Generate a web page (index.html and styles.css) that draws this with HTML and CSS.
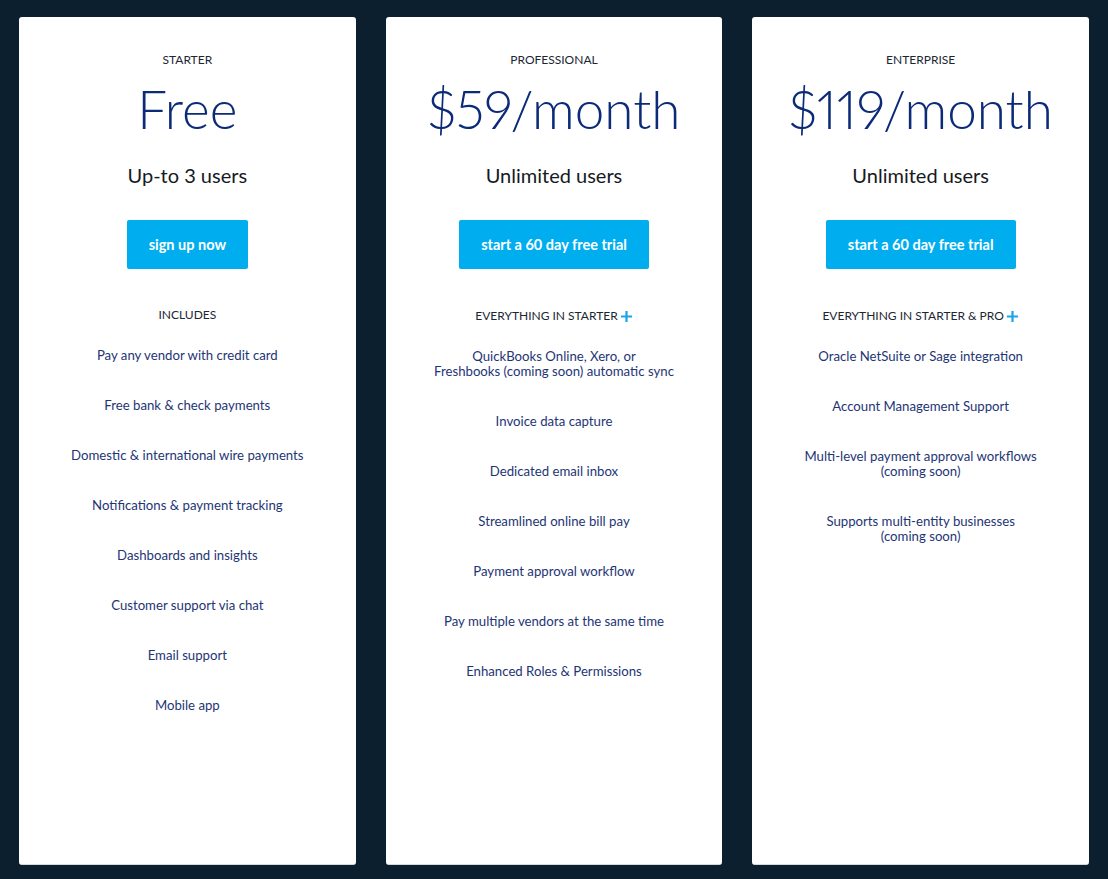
FILE: index.html
```html
<!DOCTYPE html>
<html lang="en">
<head>
<meta charset="utf-8">
<title>Pricing</title>
<link rel="stylesheet" href="styles.css">
</head>
<body>
<main class="plans">
  <section class="card">
    <h2 class="tier">STARTER</h2>
    <div class="price">Free</div>
    <div class="users">Up-to 3 users</div>
    <a class="btn" href="#">sign up now</a>
    <h3 class="inc">INCLUDES</h3>
    <ul class="features">
      <li>Pay any vendor with credit card</li>
      <li>Free bank &amp; check payments</li>
      <li>Domestic &amp; international wire payments</li>
      <li>Notifications &amp; payment tracking</li>
      <li>Dashboards and insights</li>
      <li>Customer support via chat</li>
      <li>Email support</li>
      <li>Mobile app</li>
    </ul>
  </section>
  <section class="card">
    <h2 class="tier">PROFESSIONAL</h2>
    <div class="price">$59/month</div>
    <div class="users">Unlimited users</div>
    <a class="btn" href="#">start a 60 day free trial</a>
    <h3 class="inc">EVERYTHING IN STARTER<span class="plus"><svg viewBox="0 0 14 14" width="13" height="13"><path d="M7 1v12M1 7h12" stroke="#1aa5ec" stroke-width="2.4" fill="none"/></svg></span></h3>
    <ul class="features">
      <li>QuickBooks Online, Xero, or<br>Freshbooks (coming soon) automatic sync</li>
      <li>Invoice data capture</li>
      <li>Dedicated email inbox</li>
      <li>Streamlined online bill pay</li>
      <li>Payment approval workflow</li>
      <li>Pay multiple vendors at the same time</li>
      <li>Enhanced Roles &amp; Permissions</li>
    </ul>
  </section>
  <section class="card">
    <h2 class="tier">ENTERPRISE</h2>
    <div class="price">$119/month</div>
    <div class="users">Unlimited users</div>
    <a class="btn" href="#">start a 60 day free trial</a>
    <h3 class="inc">EVERYTHING IN STARTER &amp; PRO<span class="plus"><svg viewBox="0 0 14 14" width="13" height="13"><path d="M7 1v12M1 7h12" stroke="#1aa5ec" stroke-width="2.4" fill="none"/></svg></span></h3>
    <ul class="features">
      <li>Oracle NetSuite or Sage integration</li>
      <li>Account Management Support</li>
      <li>Multi-level payment approval workflows<br>(coming soon)</li>
      <li>Supports multi-entity businesses<br>(coming soon)</li>
    </ul>
  </section>
</main>
</body>
</html>
```

FILE: styles.css
```css
* { box-sizing: border-box; }
html, body { margin: 0; padding: 0; }
body {
  background: #0b1f2e;
  font-family: Lato, "Open Sans", sans-serif;
  width: 1108px;
  height: 879px;
  overflow: hidden;
}
.plans {
  display: grid;
  grid-template-columns: repeat(3, 1fr);
  gap: 30px;
  padding: 17px 19px 0;
}
.card {
  background: #fff;
  border-radius: 3px;
  height: 848px;
  display: flex;
  flex-direction: column;
  align-items: center;
  text-align: center;
  border-bottom: 1px solid #d8d8d8;
}
.tier {
  margin: 36px 0 0;
  font-size: 12px;
  line-height: 14px;
  font-weight: 400;
  color: #1b2733;
}
.price {
  margin-top: 12px;
  font-size: 53px;
  line-height: 60px;
  font-weight: 300;
  color: #0b2a78;
  font-variant-numeric: proportional-nums;
  font-feature-settings: "pnum" 1;
}
.users {
  margin-top: 24px;
  font-size: 20px;
  line-height: 24px;
  color: #161a22;
}
.btn {
  margin-top: 33px;
  height: 49px;
  padding: 0 22px;
  display: flex;
  align-items: center;
  background: #00aeef;
  color: #fff;
  border-radius: 2px;
  text-decoration: none;
  font-size: 14.5px;
  font-weight: 700;
}
.inc {
  margin: 39px 0 0;
  font-size: 12px;
  line-height: 14px;
  font-weight: 400;
  color: #1b2733;
  display: flex;
  align-items: center;
}
.plus {
  display: inline-flex;
  margin-left: 2px;
  margin-top: 2px;
}
.features {
  list-style: none;
  margin: 26px 0 0;
  padding: 0;
}
.features li {
  font-size: 13.2px;
  line-height: 15px;
  color: #1e3575;
  margin-bottom: 35px;
}
```
